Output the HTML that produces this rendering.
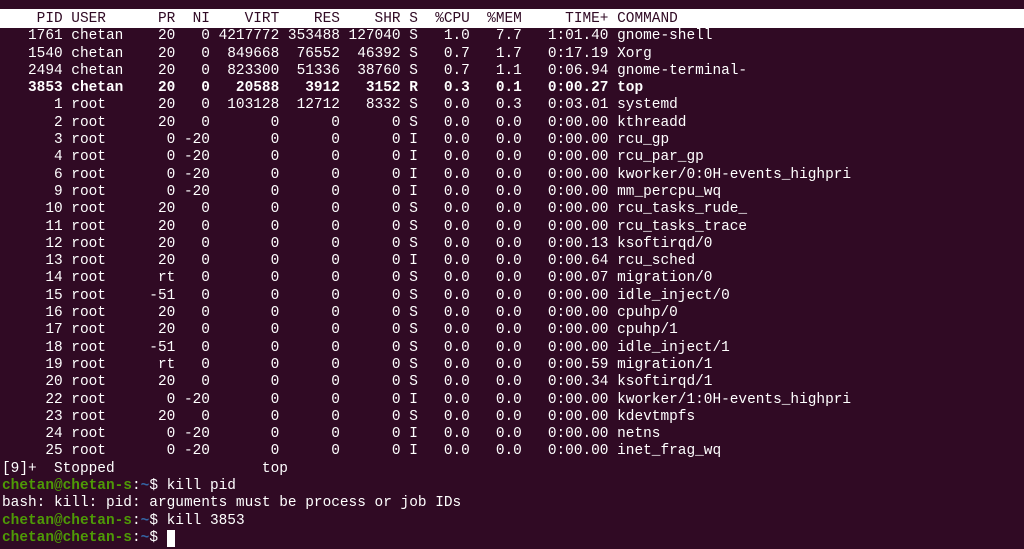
<!DOCTYPE html>
<html><head><meta charset="utf-8"><style>
html,body{margin:0;padding:0;background:#300a24;width:1024px;height:549px;overflow:hidden}
pre{margin:0;position:absolute;top:11px;left:2px;font-family:"Liberation Mono","DejaVu Sans Mono",monospace;font-size:14.45px;line-height:17.3px;color:#ffffff}
.h{background:#fff;color:#300a24;display:block;width:1022px;margin-left:-2px;padding-left:2px;box-shadow:0 -2px 0 #fff}
b{font-weight:bold}
.g{color:#4e9a06;font-weight:bold}
.bl{color:#3465a4;font-weight:bold}
.c{background:#fff;display:inline-block;width:8px;height:17px;vertical-align:top}
</style></head><body><pre><span class="h">    PID USER      PR  NI    VIRT    RES    SHR S  %CPU  %MEM     TIME+ COMMAND</span>   1761 chetan    20   0 4217772 353488 127040 S   1.0   7.7   1:01.40 gnome-shell
   1540 chetan    20   0  849668  76552  46392 S   0.7   1.7   0:17.19 Xorg
   2494 chetan    20   0  823300  51336  38760 S   0.7   1.1   0:06.94 gnome-terminal-
<b>   3853 chetan    20   0   20588   3912   3152 R   0.3   0.1   0:00.27 top</b>
      1 root      20   0  103128  12712   8332 S   0.0   0.3   0:03.01 systemd
      2 root      20   0       0      0      0 S   0.0   0.0   0:00.00 kthreadd
      3 root       0 -20       0      0      0 I   0.0   0.0   0:00.00 rcu_gp
      4 root       0 -20       0      0      0 I   0.0   0.0   0:00.00 rcu_par_gp
      6 root       0 -20       0      0      0 I   0.0   0.0   0:00.00 kworker/0:0H-events_highpri
      9 root       0 -20       0      0      0 I   0.0   0.0   0:00.00 mm_percpu_wq
     10 root      20   0       0      0      0 S   0.0   0.0   0:00.00 rcu_tasks_rude_
     11 root      20   0       0      0      0 S   0.0   0.0   0:00.00 rcu_tasks_trace
     12 root      20   0       0      0      0 S   0.0   0.0   0:00.13 ksoftirqd/0
     13 root      20   0       0      0      0 I   0.0   0.0   0:00.64 rcu_sched
     14 root      rt   0       0      0      0 S   0.0   0.0   0:00.07 migration/0
     15 root     -51   0       0      0      0 S   0.0   0.0   0:00.00 idle_inject/0
     16 root      20   0       0      0      0 S   0.0   0.0   0:00.00 cpuhp/0
     17 root      20   0       0      0      0 S   0.0   0.0   0:00.00 cpuhp/1
     18 root     -51   0       0      0      0 S   0.0   0.0   0:00.00 idle_inject/1
     19 root      rt   0       0      0      0 S   0.0   0.0   0:00.59 migration/1
     20 root      20   0       0      0      0 S   0.0   0.0   0:00.34 ksoftirqd/1
     22 root       0 -20       0      0      0 I   0.0   0.0   0:00.00 kworker/1:0H-events_highpri
     23 root      20   0       0      0      0 S   0.0   0.0   0:00.00 kdevtmpfs
     24 root       0 -20       0      0      0 I   0.0   0.0   0:00.00 netns
     25 root       0 -20       0      0      0 I   0.0   0.0   0:00.00 inet_frag_wq
[9]+  Stopped                 top
<span class="g">chetan@chetan-s</span>:<span class="bl">~</span>$ kill pid
bash: kill: pid: arguments must be process or job IDs
<span class="g">chetan@chetan-s</span>:<span class="bl">~</span>$ kill 3853
<span class="g">chetan@chetan-s</span>:<span class="bl">~</span>$ <span class="c"></span></pre></body></html>
